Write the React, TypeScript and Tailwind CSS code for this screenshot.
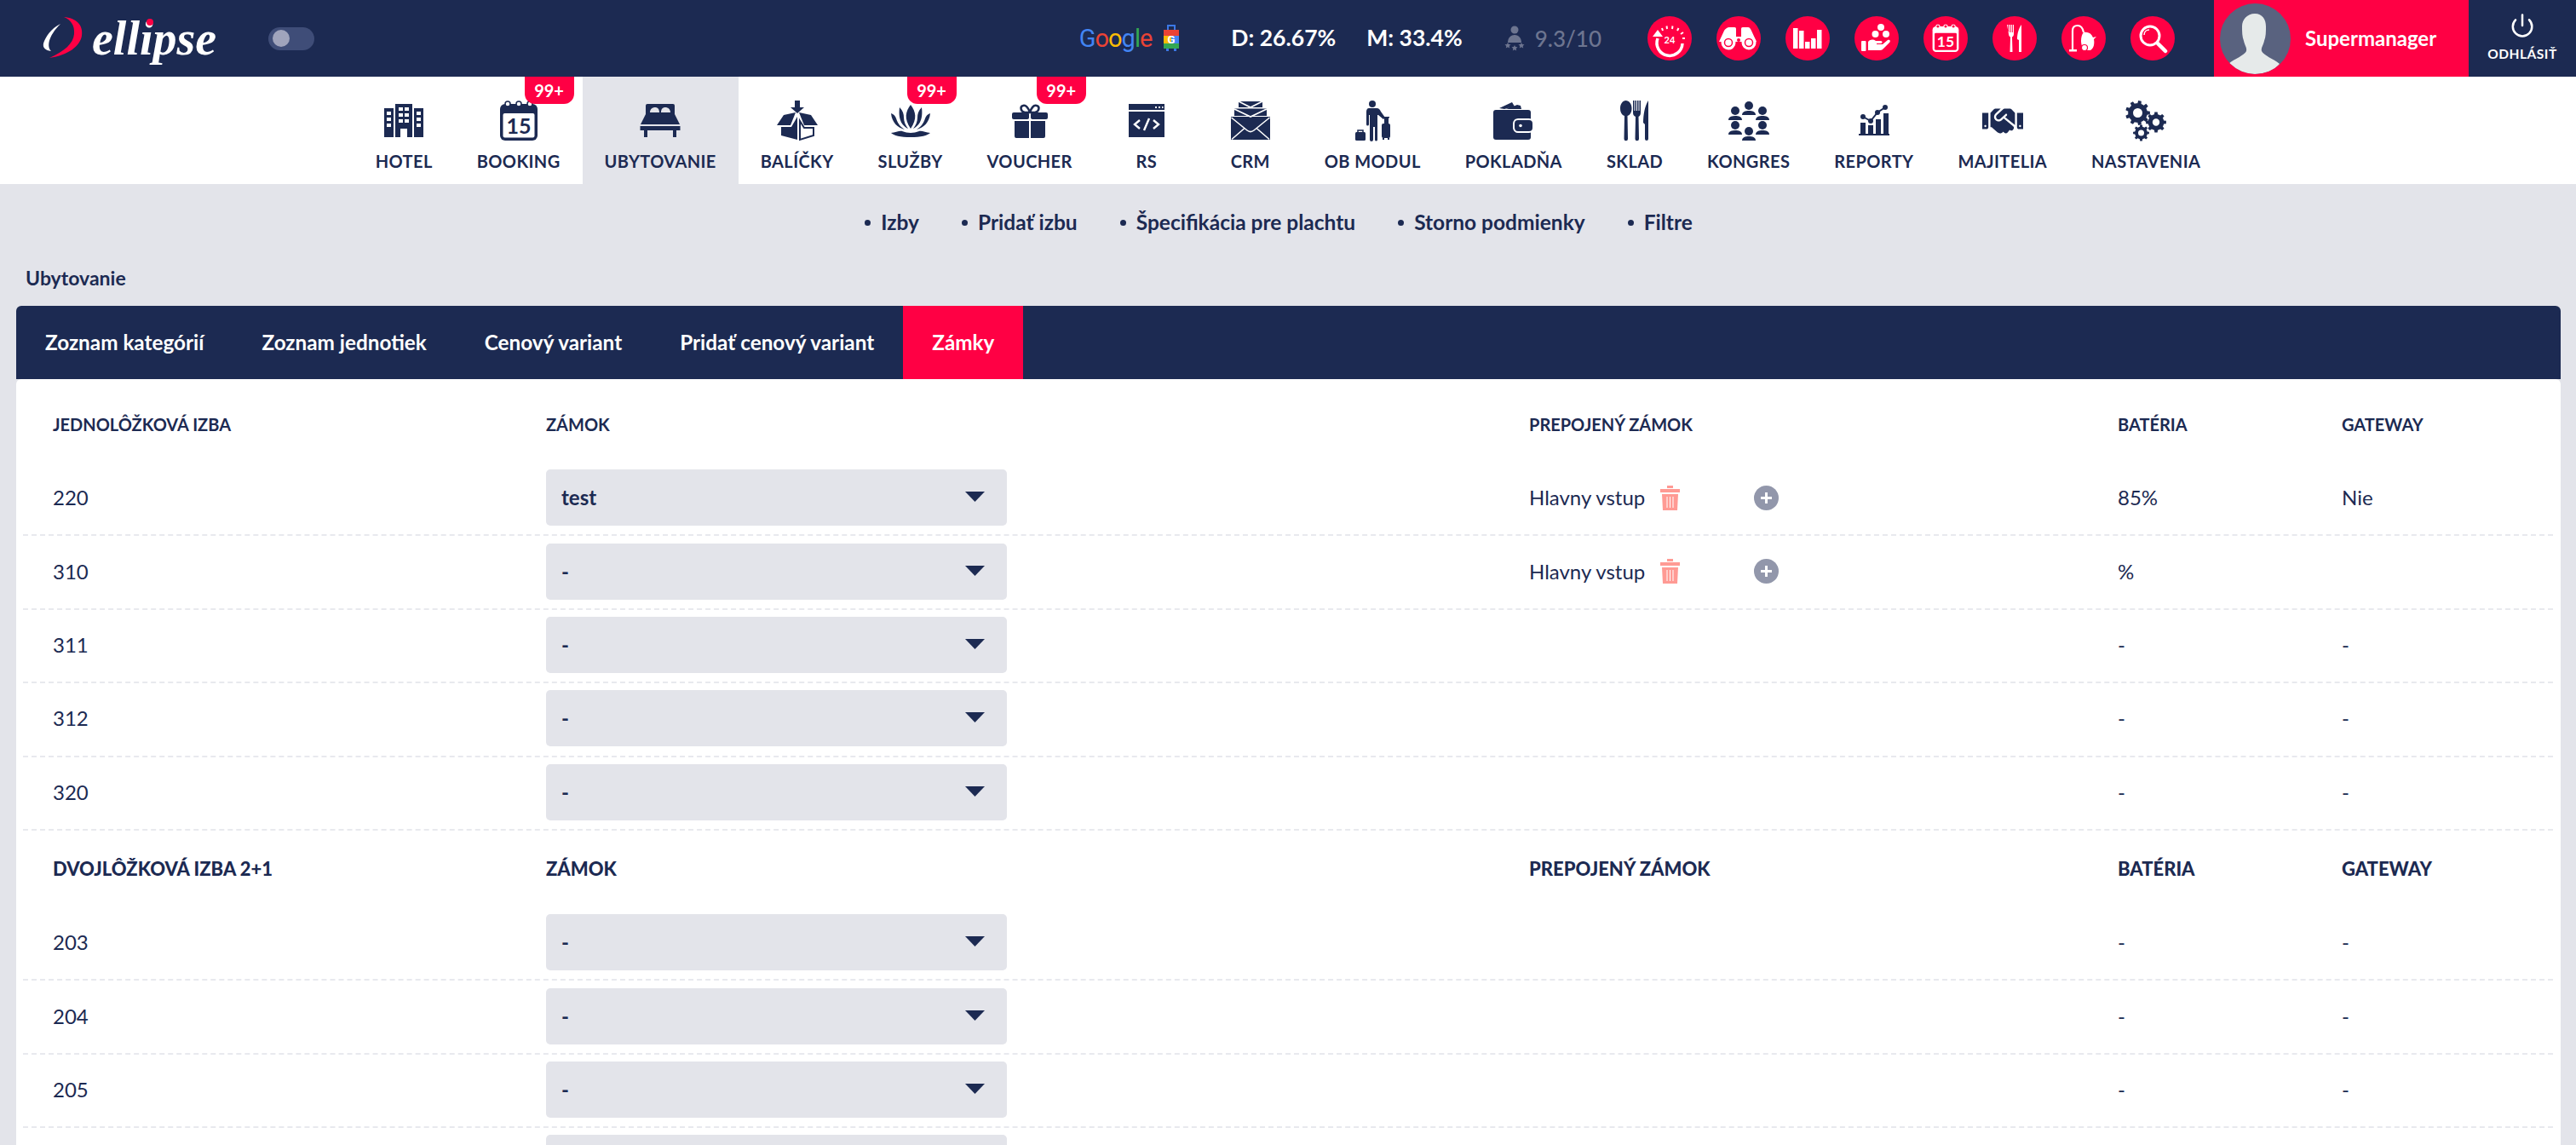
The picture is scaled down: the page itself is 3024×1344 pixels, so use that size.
import type { ReactNode } from 'react';
import { Power } from 'lucide-react';
import { FaHandshake } from 'react-icons/fa';

type IconProps = { cut?: string };

function gear(cx: number, cy: number, r: number, teeth: number, hole: number) {
  const inner = r * 0.78;
  const step = (Math.PI * 2) / teeth;
  let d = '';
  for (let i = 0; i < teeth; i++) {
    const a = i * step;
    const pts = [
      [inner, a - step * 0.5],
      [inner, a - step * 0.28],
      [r, a - step * 0.18],
      [r, a + step * 0.18],
      [inner, a + step * 0.28],
    ];
    pts.forEach(([rad, ang], j) => {
      d += `${i === 0 && j === 0 ? 'M' : 'L'}${(cx + rad * Math.cos(ang)).toFixed(2)} ${(cy + rad * Math.sin(ang)).toFixed(2)}`;
    });
  }
  d += `Z M${cx - hole} ${cy}a${hole} ${hole} 0 1 0 ${hole * 2} 0a${hole} ${hole} 0 1 0 ${-hole * 2} 0Z`;
  return d;
}

function Box48({ children, size = 48 }: { children: ReactNode; size?: number }) {
  return (
    <svg width={size} height={size} viewBox="0 0 48 48" fill="currentColor">
      {children}
    </svg>
  );
}

function HotelIcon() {
  return (
    <Box48>
      <path d="M1 9h11v34H1zM14 4h20v39h-6v-10h-8v10h-6zM36 9h11v34H36z" />
      <g fill="#fff">
        <path d="M4 13h5v4H4zM4 20h5v4H4zM4 27h5v4H4zM39 13h5v4h-5zM39 20h5v4h-5zM39 27h5v4h-5z" />
        <path d="M18 8h5v4h-5zM25 8h5v4h-5zM18 15h5v4h-5zM25 15h5v4h-5zM18 22h5v4h-5zM25 22h5v4h-5z" />
      </g>
    </Box48>
  );
}

function CalendarIcon({ cut = '#fff' }: IconProps) {
  return (
    <Box48>
      <rect x="2" y="4" width="44" height="43" rx="6" />
      <rect x="5.5" y="15" width="37" height="28.5" rx="2" fill={cut} />
      <g fill={cut} stroke="currentColor" strokeWidth="1.5">
        <circle cx="11" cy="4" r="3" />
        <circle cx="24" cy="4" r="3" />
        <circle cx="37" cy="4" r="3" />
      </g>
      <text x="24" y="39" textAnchor="middle" fontSize="25" fontWeight="700" fontFamily="Lato, sans-serif">15</text>
    </Box48>
  );
}

function BedIcon() {
  return (
    <Box48>
      <path d="M9 4h30a2 2 0 0 1 2 2v10H7V6a2 2 0 0 1 2-2z" />
      <path d="M12 14c0-4 3-6 6-6s5 2 5 6zM25 14c0-4 2-6 5-6s6 2 6 6z" fill="#e3e4ea" />
      <path d="M7 16h34l6 12H1z" />
      <path d="M.5 30h47v5H.5zM5 35h4v8H5zM39 35h4v8h-4z" />
    </Box48>
  );
}

function BoxIcon() {
  return (
    <Box48>
      <path d="M21 0h6v8h5l-8 7-8-7h5z" />
      <path d="M0 29 8 17l14-3-6 15zM48 29l-8-12-14-3 6 15z" />
      <path d="M5 31h12l7-12v27L5 41z" />
      <path d="M27 24l5 8h11v9l-16 5z" fill="#fff" stroke="currentColor" strokeWidth="2" />
    </Box48>
  );
}

function LotusIcon() {
  return (
    <Box48>
      <path d="M24 5c6 8 8 16 0 28-8-12-6-20 0-28z" />
      <path d="M11 8c4 4 5 8 5 12 0 5 2 9 5 13-6-3-12-9-10-25zM37 8c-4 4-5 8-5 12 0 5-2 9-5 13 6-3 12-9 10-25z" />
      <path d="M1 15c3 1 5 3 6 6 2 6 5 10 10 13C9 32 2 26 1 15zM47 15c-3 1-5 3-6 6-2 6-5 10-10 13 8-2 15-8 16-19z" />
      <path d="M1 38c5 0 10-3 13-2 3 1 7 2 10 2s7-1 10-2c3-1 8 2 13 2-3 3-11 5-23 5S4 41 1 38z" />
    </Box48>
  );
}

function GiftIcon() {
  return (
    <Box48>
      <path d="M24 14C22 8 19 5 16 6c-4 1-3 7 2 8zM24 14c2-6 5-9 8-8 4 1 3 7-2 8z" fill="none" stroke="currentColor" strokeWidth="2.5" />
      <rect x="3" y="14" width="20" height="8" rx="2" />
      <rect x="25" y="14" width="20" height="8" rx="2" />
      <path d="M6 24h17v20H8a2 2 0 0 1-2-2zM25 24h17v18a2 2 0 0 1-2 2H25z" />
    </Box48>
  );
}

function CodeIcon() {
  return (
    <Box48>
      <path d="M3 4h42v7H3zM3 13h42v30H3z" />
      <path d="M34 7h2v2h-2zM38 7h2v2h-2zM42 7h1.500v2H42z" fill="#fff" />
      <path d="M16 23l-6 5 6 5M32 23l6 5-6 5M27 21l-6 14" fill="none" stroke="#fff" strokeWidth="2.4" />
    </Box48>
  );
}

function MailIcon() {
  return (
    <Box48>
      <path d="M10 1h28v7H10zM5 9.500h38V18H5zM1 19h46v27H1z" />
      <path d="M10 1l14 7 14-7M5 10l19 9 19-9M1.500 20L20 35c2.500 2 5.500 2 8 0l18.500-15M2 45.500l15-13M46 45.500l-15-13" fill="none" stroke="#fff" strokeWidth="1.600" />
    </Box48>
  );
}

function TravelIcon() {
  return (
    <Box48>
      <circle cx="24" cy="4" r="4" />
      <path d="M18 9h11c3 0 4 2 5 4l5 7-2 2-6-5-1 0v29a1.500 1.500 0 0 1-3 0V31h-2v15a1.500 1.500 0 0 1-4 0V17l-1 0v11a1.200 1.200 0 0 1-3 0V13c0-2 1-4 3-4z" />
      <rect x="35" y="27" width="10" height="17" rx="2" />
      <path d="M38 27v-7h4v7M36 44h2v2h-2zM42 44h2v2h-2z" />
      <path d="M37 19h7v1.500h-7zM38 20h1v7h-1zM42 20h1v7h-1z" />
      <rect x="4" y="37" width="12" height="10" rx="1.500" />
      <path d="M7 37v-2h6v2" fill="none" stroke="currentColor" strokeWidth="1.500" />
    </Box48>
  );
}

function WalletIcon() {
  return (
    <Box48>
      <path d="M7 9l15-7 3 5-12 3zM15 10l13-5 4 1 1 4z" />
      <rect x="0" y="11" width="44" height="35" rx="3" />
      <rect x="24" y="22" width="23" height="15" rx="5" stroke="#fff" strokeWidth="2" />
      <circle cx="32" cy="29.500" r="1.800" fill="#fff" />
    </Box48>
  );
}

function CutleryIcon() {
  return (
    <Box48>
      <path d="M13.500 0c4 0 7 4 7 9s-2 8-5 9l.5 27a2 2 0 0 1-4.500 0l.5-27c-3-1-5-4-5-9s3-9 6.500-9z" />
      <path d="M22 0h1.500v12h1V0h1.500v12h1V0h1.500v12h1V0H31v14c0 3-1 4-2.500 5l.5 26a2 2 0 0 1-4.500 0l.5-26C23 18 22 17 22 14z" />
      <path d="M40 0v45a2 2 0 0 1-4 0V28l-2-2c0-10 2-20 6-26z" />
    </Box48>
  );
}

function People() {
  const spots = [[24, 1], [8, 7], [40, 7], [8, 24], [40, 24], [24, 31]];
  return (
    <Box48>
      {spots.map(([x, y]) => (
        <g key={`${x}-${y}`}>
          <circle cx={x} cy={y + 5} r="5" />
          <path d={`M${x - 8} ${y + 16}c0-4 4-5 8-5s8 1 8 5z`} />
        </g>
      ))}
    </Box48>
  );
}

function ReportIcon() {
  return (
    <Box48>
      <path d="M6 39h36v2H6zM8 26h6v13H8zM17 29h6v10h-6zM26 22h6v17h-6zM35 15h6v24h-6z" />
      <path d="M11 19l9 5 8-10 9-6" fill="none" stroke="currentColor" strokeWidth="2" />
      <circle cx="11" cy="19" r="3" />
      <circle cx="20" cy="24" r="3" />
      <circle cx="28" cy="14" r="3" />
      <circle cx="37" cy="8" r="3" />
    </Box48>
  );
}

function GearsIcon() {
  return (
    <Box48>
      <path fillRule="evenodd" d={gear(14.5, 14.5, 14.5, 9, 5.5)} />
      <path fillRule="evenodd" d={gear(36, 25.500, 12, 8, 4.2)} />
      <path fillRule="evenodd" d={gear(18.500, 38, 9.500, 8, 3.5)} />
    </Box48>
  );
}

function Icon24() {
  return (
    <svg width="52" height="52" viewBox="0 0 52 52" fill="#fff">
      <path d="M12 26a15 15 0 1 0 29 6" fill="none" stroke="#fff" strokeWidth="3.500" />
      <path d="M6 24l6-8 6 8z" />
      <path d="M18 17l-1-3M23 15l-.5-3.500M29 15l.5-3.500M35 17l1.500-3M39 21l3-2M41 26h3" stroke="#fff" strokeWidth="2" />
      <text x="26" y="32" textAnchor="middle" fontSize="11" fontWeight="700" fontFamily="Lato, sans-serif">24</text>
    </svg>
  );
}

function Binoculars() {
  return (
    <svg width="52" height="52" viewBox="0 0 52 52" fill="#fff">
      <path d="M15 13h6c2 0 2 1 2 3v8h6v-8c0-2 0-3 2-3h6c2 0 3 2 4 4l6 13H3l6-13c1-2 4-4 6-4z" />
      <circle cx="14" cy="31" r="8.500" fill="#fff" />
      <circle cx="38" cy="31" r="8.500" fill="#fff" />
      <circle cx="14" cy="31" r="4.500" fill="none" stroke="#ff0044" strokeWidth="1.500" />
      <circle cx="38" cy="31" r="4.500" fill="none" stroke="#ff0044" strokeWidth="1.500" />
      <circle cx="26" cy="28" r="2" fill="#ff0044" />
    </svg>
  );
}

function Bars() {
  return (
    <svg width="52" height="52" viewBox="0 0 52 52" fill="#fff">
      <path d="M9 14h5.500v24H9zM16 17h5.500v21H16zM23 30h5.500v8H23zM30 26h5.500v12H30zM37 16h5.500v22H37z" />
    </svg>
  );
}

function HandIcon() {
  return (
    <svg width="52" height="52" viewBox="0 0 52 52" fill="#fff">
      <circle cx="31" cy="13" r="4" />
      <circle cx="24.500" cy="21" r="4" />
      <circle cx="37" cy="21" r="4" />
      <rect x="8" y="29" width="5.500" height="12" rx="1" />
      <path d="M16 30c3-3 6-3 9-1h6c2 0 2 3 0 3h-5v1h7l6-5c2-1 4 1 2 3l-7 7c-1 1-2 2-4 2H16z" />
    </svg>
  );
}

function BigCal() {
  return (
    <div className="flex items-center justify-center text-white">
      <CalendarIcon cut="#ff0044" />
    </div>
  );
}

function ForkKnife() {
  return (
    <svg width="52" height="52" viewBox="0 0 52 52" fill="#fff">
      <path d="M18 10h1.200v9h1V10h1.300v9h1V10h1.300v9h1V10H26v11c0 2-1 3-2 3.500l.5 17.500h-3l.5-17.500c-1-.5-2-1.500-2-3.500z" transform="translate(-1 0)" />
      <path d="M34 10v32h-3V28l-2-1c0-7 2-13 5-17z" />
    </svg>
  );
}

function Vacuum() {
  return (
    <svg width="52" height="52" viewBox="0 0 52 52" fill="#fff">
      <path d="M13 39V17c0-4 2-6 6-6s6 3 7 8" fill="none" stroke="#fff" strokeWidth="2.200" />
      <path d="M9 39h9v2.500H9z" />
      <path d="M26 19c5-1 9 1 11 6l4-1-3 3c1 5 0 11-4 13H28c-3-2-5-6-5-11 0-4 1-8 3-10z" />
      <circle cx="27" cy="37" r="3.500" stroke="#ff0044" strokeWidth="1.200" />
    </svg>
  );
}

function Search() {
  return (
    <svg width="52" height="52" viewBox="0 0 52 52" fill="none" stroke="#fff">
      <circle cx="23" cy="23" r="11" strokeWidth="3" />
      <path d="M16 22c0-4 3-6 6-6" strokeWidth="1.500" />
      <path d="M32 32l9 9" strokeWidth="4.500" strokeLinecap="round" />
    </svg>
  );
}

function Suitcase() {
  return (
    <svg width="20" height="32" viewBox="0 0 20 32">
      <path d="M6 6V1h8v5" fill="none" stroke="#3b78e7" strokeWidth="2" />
      <path d="M1 6h18v7H1z" fill="#ea4335" />
      <path d="M1 13h9v13H1z" fill="#fbbc05" />
      <path d="M10 13h9v13h-9z" fill="#4285f4" />
      <path d="M1 22h18v6H1z" fill="#34a853" />
      <path d="M4 28h3v3H4zM13 28h3v3h-3z" fill="#3b78e7" />
      <text x="10" y="22" textAnchor="middle" fontSize="13" fontWeight="700" fill="#fff" fontFamily="Roboto, sans-serif">G</text>
    </svg>
  );
}

function RatingIcon() {
  return (
    <svg width="26" height="30" viewBox="0 0 26 30" fill="#6d7590">
      <circle cx="13" cy="5" r="4.500" />
      <path d="M5 20c0-6 4-9 8-9s8 3 8 9z" />
      <path d="M5 20l1 2 2.500.3-1.800 1.700.5 2.500L5 25.300l-2.200 1.200.5-2.500-1.800-1.700L4 22zM21 20l1 2 2.500.3-1.800 1.700.5 2.500-2.200-1.200-2.200 1.200.5-2.500-1.800-1.700L20 22zM13 23l1 2 2.500.3-1.800 1.700.5 2.500-2.200-1.200-2.200 1.200.5-2.500-1.800-1.700L12 25z" />
    </svg>
  );
}

function Trash() {
  return (
    <svg width="23" height="29" viewBox="0 0 23 29" fill="#ff9a94">
      <path d="M8 0h7v3H8zM0 4h23v4H0zM2 10h19l-1 19H3z" />
      <path d="M8 13v13M11.500 13v13M15 13v13" stroke="#fff" strokeWidth="1" />
    </svg>
  );
}

function PlusCircle() {
  return (
    <svg width="29" height="29" viewBox="0 0 29 29">
      <circle cx="14.500" cy="14.500" r="14.500" fill="#9297ab" />
      <path d="M14.500 8v13M8 14.500h13" stroke="#fff" strokeWidth="3" />
    </svg>
  );
}

function Caret() {
  return (
    <svg width="23" height="12" viewBox="0 0 23 12" className="absolute right-[26px] top-[26px]">
      <path d="M0 0h23L11.500 12z" fill="#1c2a52" />
    </svg>
  );
}

function Select({ value }: { value: string }) {
  return (
    <div className="relative flex h-[66px] w-[541px] items-center rounded-[5px] bg-[#e3e4ea] pl-[18px] text-[24px] font-bold">
      {value}
      <Caret />
    </div>
  );
}

const nav: { label: string; icon: ReactNode; badge?: boolean; active?: boolean; wide?: boolean }[] = [
  { label: 'HOTEL', icon: <HotelIcon /> },
  { label: 'BOOKING', icon: <CalendarIcon />, badge: true },
  { label: 'UBYTOVANIE', icon: <BedIcon />, active: true },
  { label: 'BALÍČKY', icon: <BoxIcon /> },
  { label: 'SLUŽBY', icon: <LotusIcon />, badge: true },
  { label: 'VOUCHER', icon: <GiftIcon />, badge: true },
  { label: 'RS', icon: <CodeIcon />, wide: true },
  { label: 'CRM', icon: <MailIcon />, wide: true },
  { label: 'OB MODUL', icon: <TravelIcon /> },
  { label: 'POKLADŇA', icon: <WalletIcon /> },
  { label: 'SKLAD', icon: <CutleryIcon /> },
  { label: 'KONGRES', icon: <People /> },
  { label: 'REPORTY', icon: <ReportIcon /> },
  { label: 'MAJITELIA', icon: <FaHandshake size={48} /> },
  { label: 'NASTAVENIA', icon: <GearsIcon /> },
];

const quick = [<Icon24 />, <Binoculars />, <Bars />, <HandIcon />, <BigCal />, <ForkKnife />, <Vacuum />, <Search />];

const submenu = ['Izby', 'Pridať izbu', 'Špecifikácia pre plachtu', 'Storno podmienky', 'Filtre'];
const tabs = ['Zoznam kategórií', 'Zoznam jednotiek', 'Cenový variant', 'Pridať cenový variant'];

type Row = { room: string; lock: string; link?: boolean; battery: string; gateway: string };

const single: Row[] = [
  { room: '220', lock: 'test', link: true, battery: '85%', gateway: 'Nie' },
  { room: '310', lock: '-', link: true, battery: '%', gateway: '' },
  { room: '311', lock: '-', battery: '-', gateway: '-' },
  { room: '312', lock: '-', battery: '-', gateway: '-' },
  { room: '320', lock: '-', battery: '-', gateway: '-' },
];

const double: Row[] = [
  { room: '203', lock: '-', battery: '-', gateway: '-' },
  { room: '204', lock: '-', battery: '-', gateway: '-' },
  { room: '205', lock: '-', battery: '-', gateway: '-' },
  { room: '', lock: '', battery: '', gateway: '' },
];

const cols = 'grid grid-cols-[579px_1154px_691px_263px_1fr]';

function Group({ title, rows, tall }: { title: string; rows: Row[]; tall?: boolean }) {
  return (
    <>
      <div className={`${cols} h-[90px] items-center uppercase ${tall ? 'text-[22px] font-black' : 'text-[20px] font-bold'}`}>
        <div className="pl-[35px]">{title}</div>
        <div className="pl-[35px]">Zámok</div>
        <div className="pl-[35px]">Prepojený zámok</div>
        <div className="pl-[35px]">Batéria</div>
        <div className="pl-[35px]">Gateway</div>
      </div>
      {rows.map((r) => (
        <div key={r.room + r.lock + r.battery} className={`${cols} h-[86.4px] items-center border-b-2 border-dashed border-[#e8e9ee] pb-[2px] text-[24px]`}>
          <div className="pl-[35px]">{r.room}</div>
          <div className="pl-[35px]"><Select value={r.lock} /></div>
          <div className="pl-[35px]">
            {r.link && (
              <div className="flex items-center">
                <span className="w-[154px]">Hlavny vstup</span>
                <Trash />
                <span className="ml-[87px]"><PlusCircle /></span>
              </div>
            )}
          </div>
          <div className="pl-[35px]">{r.battery}</div>
          <div className="pl-[35px]">{r.gateway}</div>
        </div>
      ))}
    </>
  );
}

export default function App() {
  return (
    <div className="h-[1344px] overflow-hidden bg-[#e3e4ea] font-['Lato',sans-serif] text-[#1c2a52]">
      <header className="flex h-[90px] items-center bg-[#1c2a52] text-white">
        <div className="relative ml-[50px] flex h-[90px] w-[206px] items-center">
          <svg width="50" height="52" viewBox="0 0 50 52">
            <path d="M25 1c14 1 23 9 21 22C44 35 30 46 8 49c18-8 28-17 29-28C38 11 33 4 25 1z" fill="#ff0044" />
            <path d="M21 9C10 14 3 25 1 32c-1 5 2 8 9 9C5 36 6 24 21 9z" fill="#fff" />
          </svg>
          <span className="ml-[8px] font-['Liberation_Serif',serif] text-[56px] leading-none font-bold italic">ellipse</span>
          <span className="absolute left-[122px] top-[22px] h-[8px] w-[8px] rounded-full bg-[#ff0044]" />
        </div>
        <div className="ml-[59px] flex h-[27px] w-[54px] items-center rounded-full bg-[#3f4d78] pl-[5px]">
          <span className="h-[20px] w-[20px] rounded-full bg-[#a0a4bc]" />
        </div>
        <div className="ml-auto flex items-center">
          <span className="font-['Roboto',sans-serif] text-[29px] leading-none tracking-[-1px]">
            <span className="text-[#4285f4]">G</span>
            <span className="text-[#ea4335]">o</span>
            <span className="text-[#fbbc05]">o</span>
            <span className="text-[#4285f4]">g</span>
            <span className="text-[#34a853]">l</span>
            <span className="text-[#ea4335]">e</span>
          </span>
          <span className="ml-[13px]"><Suitcase /></span>
          <span className="ml-[60px] text-[26.5px] font-bold">D: 26.67%</span>
          <span className="ml-[36px] text-[26.5px] font-bold">M: 33.4%</span>
          <span className="ml-[48px] flex items-center gap-[11px] text-[26px] font-medium text-[#6d7590]">
            <RatingIcon />
            9.3/10
          </span>
          <div className="ml-[54px] flex gap-[29px]">
            {quick.map((icon, i) => (
              <div key={i} className="flex h-[52px] w-[52px] items-center justify-center overflow-hidden rounded-full bg-[#ff0044]">
                {i === 4 ? <div className="scale-[0.7]">{icon}</div> : icon}
              </div>
            ))}
          </div>
          <div className="ml-[46px] flex h-[90px] w-[299px] items-center bg-[#ff0044] pl-[7px]">
            <div className="flex h-[83px] w-[83px] items-end justify-center overflow-hidden rounded-full bg-[#59627f]">
              <svg width="83" height="83" viewBox="0 0 83 83" fill="#e6eaea">
                <path d="M41 12c9 0 13 7 13 15 0 6 0 12-2 17-1 5-4 8-3 12 2 5 14 9 21 15-6 8-17 12-30 12s-24-4-30-12c7-6 19-10 21-15 1-4-2-7-3-12-2-5-2-11-2-17 0-8 6-15 15-15z" />
              </svg>
            </div>
            <span className="ml-[17px] text-[24px] font-bold">Supermanager</span>
          </div>
          <div className="flex h-[90px] w-[126px] flex-col items-center justify-center">
            <Power size={30} strokeWidth={2} />
            <span className="mt-[7px] text-[15.5px] font-bold tracking-[0.5px]">ODHLÁSIŤ</span>
          </div>
        </div>
      </header>

      <nav className="flex h-[126px] justify-center bg-white">
        {nav.map((item) => (
          <div key={item.label} className={`relative flex flex-col items-center px-[26px] pt-[28px] ${item.wide ? 'min-w-[122px]' : ''} ${item.active ? 'bg-[#e3e4ea]' : ''}`}>
            {item.badge && (
              <span className="absolute right-[10px] top-0 flex h-[32px] w-[58px] items-center justify-center rounded-b-[12px] bg-[#ff0044] text-[20px] font-bold text-white">99+</span>
            )}
            <div className="h-[48px]">{item.icon}</div>
            <span className="mt-[10px] text-[20px] leading-[26px] font-bold tracking-[0.4px] whitespace-nowrap">{item.label}</span>
          </div>
        ))}
      </nav>

      <div className="flex h-[90px] items-center justify-center gap-[50px] pr-[22px] text-[24.5px] font-bold">
        {submenu.map((s) => (
          <span key={s} className="flex items-center gap-[12px]">
            <span className="h-[7px] w-[7px] rounded-full bg-[#1c2a52]" />
            {s}
          </span>
        ))}
      </div>

      <div className="flex h-[53px] items-center pb-[13px] pl-[30px] text-[23px] font-bold">Ubytovanie</div>

      <main className="pl-[19px] pr-[18px]">
        <div className="flex h-[86px] rounded-t-[6px] bg-[#1c2a52] text-[24.3px] font-bold text-white">
          {tabs.map((t) => (
            <div key={t} className="flex items-center px-[34px] whitespace-nowrap">{t}</div>
          ))}
          <div className="flex items-center bg-[#ff0044] px-[34px]">Zámky</div>
        </div>
        <div className="rounded-t-[6px] bg-white pl-[8px] pr-[9px] pt-[8px]">
          <Group title="Jednolôžková izba" rows={single} />
          <Group title="Dvojlôžková izba 2+1" rows={double} tall />
        </div>
      </main>
    </div>
  );
}
